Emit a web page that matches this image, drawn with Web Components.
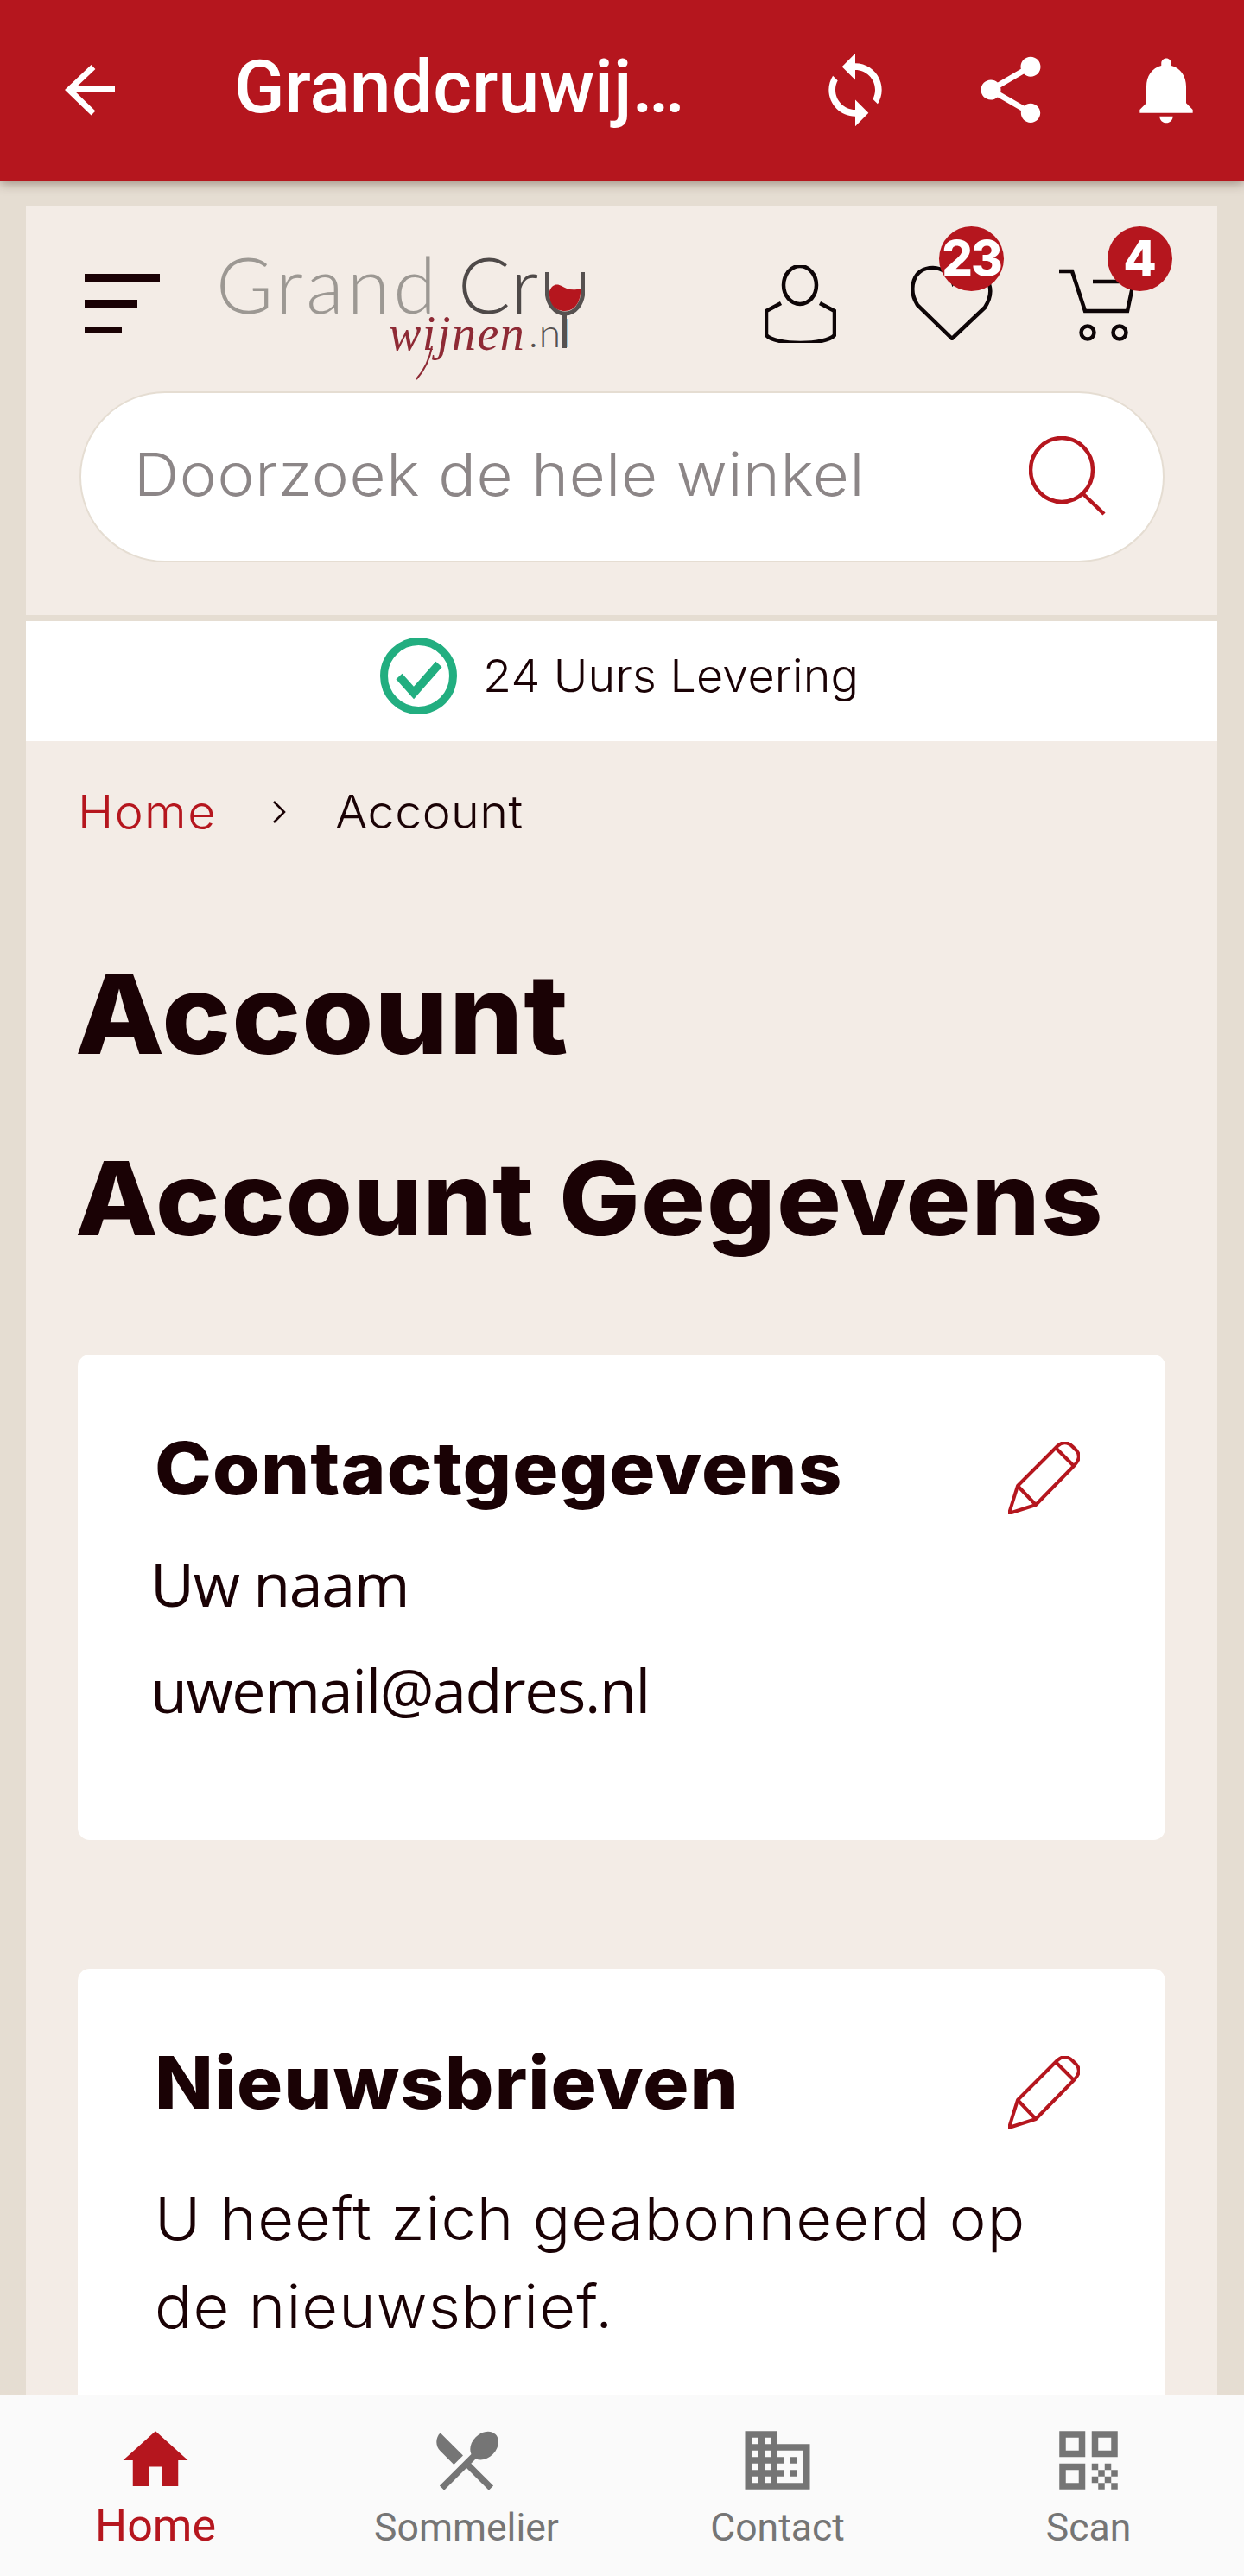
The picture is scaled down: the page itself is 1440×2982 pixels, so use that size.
<!DOCTYPE html>
<html lang="nl">
<head>
<meta charset="utf-8">
<title>Grandcruwijnen</title>
<style>
html,body{margin:0;padding:0;width:1440px;height:2982px;overflow:hidden;background:#E5DDD2;color:#1A0205;font-family:Inter,"Liberation Sans",sans-serif}
app-shell{display:block}
</style>
</head>
<body>
<app-shell>
  <app-bar title="Grandcruwij…"></app-bar>
  <shop-panel>
    <shop-header></shop-header>
    <usp-strip>24 Uurs Levering</usp-strip>
    <bread-crumb><span slot="home">Home</span><span slot="current">Account</span></bread-crumb>
    <page-heading level="1">Account</page-heading>
    <page-heading level="2">Account Gegevens</page-heading>
    <info-card heading="Contactgegevens" style="height:562px;margin-top:111px">
      <plain-line>Uw naam</plain-line>
      <plain-line>uwemail@adres.nl</plain-line>
    </info-card>
    <info-card heading="Nieuwsbrieven" style="margin-top:149px;height:700px">
      <body-text>U heeft zich geabonneerd op<br>de nieuwsbrief.</body-text>
    </info-card>
  </shop-panel>
  <bottom-nav>
    <nav-item label="Home" active><svg viewBox="0 0 24 24"><path d="M10 20v-6h4v6h5v-8h3L12 3 2 12h3v8z"/></svg></nav-item>
    <nav-item label="Sommelier"><svg viewBox="0 0 24 24"><path d="M8.1 13.34l2.83-2.83L3.91 3.5c-1.56 1.56-1.56 4.09 0 5.66l4.19 4.18zm6.78-1.81c1.53.71 3.68.21 5.27-1.38 1.91-1.91 2.28-4.65.81-6.12-1.46-1.46-4.2-1.1-6.12.81-1.59 1.59-2.09 3.74-1.38 5.27L3.7 19.87l1.41 1.41L12 14.41l6.88 6.88 1.41-1.41L13.41 13l1.47-1.47z"/></svg></nav-item>
    <nav-item label="Contact"><svg viewBox="0 0 24 24"><path d="M12 7V3H2v18h20V7H12zM6 19H4v-2h2v2zm0-4H4v-2h2v2zm0-4H4V9h2v2zm0-4H4V5h2v2zm4 12H8v-2h2v2zm0-4H8v-2h2v2zm0-4H8V9h2v2zm0-4H8V5h2v2zm10 12h-8v-2h2v-2h-2v-2h2v-2h-2V9h8v10zm-2-8h-2v2h2v-2zm0 4h-2v2h2v-2z"/></svg></nav-item>
    <nav-item label="Scan"><svg viewBox="0 0 24 24"><path d="M3 11h8V3H3v8zm2-6h4v4H5V5zM3 21h8v-8H3v8zm2-6h4v4H5v-4zM13 3v8h8V3h-8zm6 6h-4V5h4v4zM19 19h2v2h-2zM13 13h2v2h-2zM15 15h2v2h-2zM13 17h2v2h-2zM15 19h2v2h-2zM17 17h2v2h-2zM17 13h2v2h-2zM19 15h2v2h-2z"/></svg></nav-item>
  </bottom-nav>
</app-shell>
<script>
const RED='#B5161E';
function def(name,html){
  customElements.define(name,class extends HTMLElement{
    connectedCallback(){
      if(this.shadowRoot)return;
      const s=this.attachShadow({mode:'open'});
      s.innerHTML=typeof html==='function'?html(this):html;
    }
  });
}
def('app-shell',`<style>:host{display:flex;flex-direction:column;width:1440px;height:2982px;overflow:hidden}</style><slot></slot>`);

def('app-bar',el=>`<style>
:host{display:flex;align-items:flex-start;height:209px;background:${RED};box-shadow:0 3px 12px rgba(60,30,20,.45);position:relative;z-index:2;flex:none}
.back{width:61px;height:60px;margin:74px 0 0 75px;flex:none}
.t{font:500 86px/100px Roboto,sans-serif;color:#fff;margin:51px 0 0 135px;flex:1;white-space:nowrap}
.ic{display:flex;gap:88px;margin:58px 44px 0 0;flex:none}
svg.m{width:92px;height:92px;fill:#fff;display:block}
</style>
<svg class="back" viewBox="0 0 61 60"><path d="M58 29.5H6M33 3.5 5 30l28 27" fill="none" stroke="#fff" stroke-width="7"/></svg>
<div class="t">${el.getAttribute('title')}</div>
<div class="ic">
<svg class="m" viewBox="0 0 24 24"><path d="M12 4V1L8 5l4 4V6c3.31 0 6 2.69 6 6 0 1.01-.25 1.97-.7 2.8l1.46 1.46C19.54 15.03 20 13.57 20 12c0-4.42-3.58-8-8-8zm0 14c-3.31 0-6-2.69-6-6 0-1.01.25-1.97.7-2.8L5.24 7.74C4.46 8.97 4 10.43 4 12c0 4.42 3.58 8 8 8v3l4-4-4-4v3z"/></svg>
<svg class="m" viewBox="0 0 24 24"><path d="M18 16.08c-.76 0-1.44.3-1.96.77L8.91 12.7c.05-.23.09-.46.09-.7s-.04-.47-.09-.7l7.05-4.11c.54.5 1.25.81 2.04.81 1.66 0 3-1.34 3-3s-1.34-3-3-3-3 1.34-3 3c0 .24.04.47.09.7L8.04 9.81C7.5 9.31 6.79 9 6 9c-1.66 0-3 1.34-3 3s1.34 3 3 3c.79 0 1.5-.31 2.04-.81l7.12 4.16c-.05.21-.08.43-.08.65 0 1.61 1.31 2.92 2.92 2.92 1.61 0 2.92-1.31 2.92-2.92s-1.31-2.92-2.92-2.92z"/></svg>
<svg class="m" viewBox="0 0 24 24"><path d="M12 22c1.1 0 2-.9 2-2h-4c0 1.1.89 2 2 2zm6-6v-5c0-3.07-1.64-5.64-4.5-6.32V4c0-.83-.67-1.5-1.5-1.5s-1.5.67-1.5 1.5v.68C7.63 5.36 6 7.92 6 11v5l-2 2v1h16v-1l-2-2z"/></svg>
</div>`);

def('shop-panel',`<style>:host{display:block;margin:30px 31px 0 30px;width:1379px;height:2533px;background:#F3ECE6;overflow:hidden;flex:none}</style><slot></slot>`);

def('shop-header',`<style>
:host{display:block;height:473px;box-sizing:border-box;padding:0 62px 0 62px}
.row{display:flex;align-items:flex-start;height:214px;padding-left:6px}
.burger{width:87px;height:69px;margin-top:78px;flex:none}
.acts{margin-left:auto;margin-right:34px;display:flex;align-items:flex-start;padding-top:68px}
</style>
<div class="row">
<svg class="burger" viewBox="0 0 87 69"><path d="M0 0h87v9H0zM0 30h61v9H0zM0 61h43v8H0z" fill="#1A0205"/></svg>
<grand-logo></grand-logo>
<div class="acts">
<badge-icon style="margin-right:86px;width:83px"><svg width="83" height="90" viewBox="0 0 83 90" fill="none" stroke="#0D0507" stroke-width="4.5"><ellipse cx="41" cy="23" rx="19" ry="22"/><path d="M19 44 2 53v28c10 12 69 12 79 0V53L64 44"/></svg></badge-icon>
<badge-icon count="23" style="margin-right:76px;width:96px"><svg width="96" height="87" viewBox="0 0 96 87" fill="none" stroke="#0D0507" stroke-width="4.5"><path d="M48 85 8 46C-3 28 2 3 26 3c12 0 20 9 23 17C55 10 65 6 74 8c18 4 24 22 12 41z"/></svg></badge-icon>
<badge-icon count="4" style="margin-right:1px;width:86px;padding-top:4px"><svg width="86" height="84" viewBox="0 0 86 84" fill="none" stroke="#0D0507" stroke-width="4.5"><path d="M0 3h15l15 46h49l6-28M39 15h31"/><circle cx="33" cy="74" r="7.5"/><circle cx="70" cy="74" r="7.5"/></svg></badge-icon>
</div>
</div>
<search-box placeholder="Doorzoek de hele winkel"></search-box>`);

def('grand-logo',`<style>
:host{display:block;position:relative;width:430px;height:150px;margin:59px 0 0 68px;flex:none}
span{position:absolute;white-space:nowrap;font-family:Lato,sans-serif;font-weight:300}
.g{left:-3px;top:-2px;font-size:90px;line-height:.72;color:#9C9893;letter-spacing:4px}
.c{left:277px;top:-2px;font-size:90px;line-height:.72;color:#4E4948;letter-spacing:1px}
.w{left:197px;top:66px;font:italic 400 56px/.8 "Liberation Serif",serif;color:#8E2A35;letter-spacing:1.5px}
.n{left:359px;top:69px;font-size:46px;line-height:.8;color:#565150;letter-spacing:1px}
svg{position:absolute;left:378px;top:17px}
svg.sw{left:225px;top:100px}
</style>
<span class="g">Grand</span><span class="c">Cr</span>
<svg width="46" height="88" viewBox="0 0 46 88"><path d="M2 0v20c0 18 10 28 21 28s21-10 21-28V0" fill="none" stroke="#565150" stroke-width="5"/><path d="M20 88V48h5v40z" fill="#565150"/><path d="M5 22c3-8 9-9 14-6s12 6 22 3c1 14-6 26-18 26S4 36 5 22z" fill="#B5161E"/></svg>
<svg class="sw" width="26" height="44" viewBox="0 0 26 44"><path d="M22 3C19 20 12 32 4 41" fill="none" stroke="#8E2A35" stroke-width="2"/></svg>
<span class="w">wijnen</span><span class="n">.nl</span>`);

def('badge-icon',el=>{const c=el.getAttribute('count');return `<style>
:host{display:block;position:relative;flex:none}
::slotted(svg){display:block}
.b{position:absolute;top:-45px;right:${c==='4'?-45:-12}px;width:75px;height:75px;border-radius:50%;background:${RED};color:#fff;font:800 56px/75px Inter,sans-serif;text-align:center;letter-spacing:${c==='4'?0:-2}px;white-space:nowrap}
</style><slot></slot>${c?`<div class="b">${c}</div>`:''}`});

def('search-box',el=>`<style>
:host{display:flex;align-items:center;box-sizing:border-box;width:1256px;height:198px;background:#fff;border:2px solid #E5DDD2;border-radius:99px;padding:0 65px 0 61px}
.p{font:300 69px/1 Inter,sans-serif;color:#8C8687;flex:1;white-space:nowrap;letter-spacing:.6px;transform:scaleX(1.052);transform-origin:0 50%;margin-top:-6px}
svg{display:block;width:90px;height:92px;flex:none;margin-top:-2px}
</style><div class="p">${el.getAttribute('placeholder')}</div>
<svg viewBox="0 0 90 92" fill="none" stroke="${RED}"><ellipse cx="38" cy="39" rx="36" ry="37" stroke-width="4.5"/><path d="M63 67 87 90" stroke-width="4.5"/></svg>`);

def('usp-strip',`<style>
:host{display:flex;align-items:center;justify-content:center;height:139px;background:#fff;border-top:7px solid #E5DDD2;padding-right:19px}
.in{display:flex;align-items:center;gap:30px;margin-top:-12px}
svg{width:89px;height:89px;flex:none}
span{font:300 52px/60px Inter,sans-serif;color:#1A0205;white-space:nowrap;letter-spacing:.2px;transform:scaleX(1.035);transform-origin:0 50%}
</style><div class="in"><svg viewBox="0 0 89 89" fill="none" stroke="#22AE80" stroke-width="9"><circle cx="44.5" cy="44.5" r="40"/><path d="M22 45l17 19 29-33" stroke-width="9.5"/></svg><span><slot></slot></span></div>`);

def('bread-crumb',`<style>
:host{display:flex;align-items:center;height:60px;margin:52px 0 0 60px;font:300 53px/60px Inter,sans-serif;color:#1A0205;white-space:nowrap;letter-spacing:1px}
span{display:block;transform:scaleX(1.05);transform-origin:0 50%}
.h{color:${RED};letter-spacing:1.4px}
.a{letter-spacing:.4px}
svg{width:16px;height:28px;margin:0 57px 0 72px;flex:none}
</style><span class="h"><slot name="home"></slot></span>
<svg viewBox="0 0 16 28" fill="none" stroke="#1A0205" stroke-width="2.5"><path d="M2 2l12 12L2 26"/></svg>
<span class="a"><slot name="current"></slot></span>`);

def('page-heading',el=>{const l=el.getAttribute('level');return `<style>
:host{display:block;margin:${l==='1'?'129px':'68px'} 0 0 57px;font:800 ${l==='1'?'128px/150px':'118px/140px'} Inter,sans-serif;color:#1A0205;white-space:nowrap;letter-spacing:1px;transform:scaleX(${l==='1'?1.05:1.058});transform-origin:0 50%}
</style><slot></slot>`});

def('info-card',el=>`<style>
:host{display:block;box-sizing:border-box;margin-left:60px;width:1259px;background:#fff;border-radius:14px;padding:82px 99px 0 84px}
.top{display:flex;justify-content:space-between;align-items:flex-start}
h2{margin:0 0 0 5px;font:800 84px/100px Inter,sans-serif;color:#1A0205;letter-spacing:1px;white-space:nowrap;transform:scaleX(1.055);transform-origin:0 50%}
svg{width:83px;height:84px;margin-top:19px;flex:none;display:block}
</style>
<div class="top"><h2>${el.getAttribute('heading')}</h2>
<svg viewBox="67 29 83 84" fill="none" stroke="${RED}" stroke-width="4" stroke-linejoin="round"><path d="M68 112 78 80 124 34q9-8 18 1l4 4q7 8-3 18L99 102zM78 80l21 22M122 36l21 21"/></svg></div>
<slot></slot>`);

def('plain-line',`<style>
:host{display:block;font:400 70px/123px "Open Sans",sans-serif;color:#1A0205;white-space:nowrap;letter-spacing:-1.4px}
:host(:first-of-type){margin-top:19px}
</style><slot></slot>`);

def('body-text',`<style>
:host{display:block;margin:53px 0 0 5px;font:300 69px/102px Inter,sans-serif;color:#1A0205;white-space:nowrap;letter-spacing:1px;transform:scaleX(1.047);transform-origin:0 50%}
</style><slot></slot>`);

def('bottom-nav',`<style>
:host{display:grid;grid-template-columns:repeat(4,360px);height:210px;background:#FAFAFA;position:relative;z-index:3;flex:none;margin-top:auto}
</style><slot></slot>`);

def('nav-item',el=>{const a=el.hasAttribute('active');return `<style>
:host{display:flex;flex-direction:column;align-items:center;padding-top:31px;color:${a?RED:'#757575'}}
::slotted(svg){width:90px;height:90px;fill:currentColor;display:block}
.l{font:400 ${a?'52px':'44.5px'}/60px Roboto,sans-serif;margin-top:${a?'1':'3'}px;white-space:nowrap}
</style><slot></slot><div class="l">${el.getAttribute('label')}</div>`});
</script>
</body>
</html>
